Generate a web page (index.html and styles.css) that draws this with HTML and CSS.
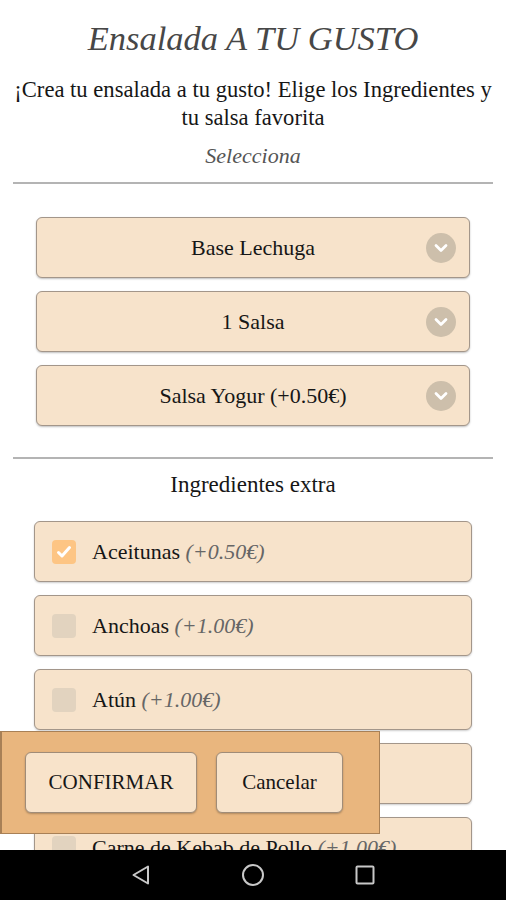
FILE: index.html
```html
<!DOCTYPE html>
<html lang="es">
<head>
<meta charset="utf-8">
<title>Ensalada A TU GUSTO</title>
<link rel="stylesheet" href="styles.css">
</head>
<body>
<div class="screen">
  <main class="content">
    <h1 class="title">Ensalada A TU GUSTO</h1>
    <p class="desc">¡Crea tu ensalada a tu gusto! Elige los Ingredientes y<br>tu salsa favorita</p>
    <p class="sub">Selecciona</p>
    <hr class="rule">
    <div class="selects">
      <div class="select"><span class="select-text">Base Lechuga</span><span class="chev"><svg width="14" height="10" viewBox="0 0 14 10"><path d="M2 2.5 L7 7.5 L12 2.5" fill="none" stroke="#fff" stroke-width="2.8" stroke-linecap="round" stroke-linejoin="round"/></svg></span></div>
      <div class="select"><span class="select-text">1 Salsa</span><span class="chev"><svg width="14" height="10" viewBox="0 0 14 10"><path d="M2 2.5 L7 7.5 L12 2.5" fill="none" stroke="#fff" stroke-width="2.8" stroke-linecap="round" stroke-linejoin="round"/></svg></span></div>
      <div class="select"><span class="select-text">Salsa Yogur (+0.50€)</span><span class="chev"><svg width="14" height="10" viewBox="0 0 14 10"><path d="M2 2.5 L7 7.5 L12 2.5" fill="none" stroke="#fff" stroke-width="2.8" stroke-linecap="round" stroke-linejoin="round"/></svg></span></div>
    </div>
    <hr class="rule rule2">
    <h2 class="section">Ingredientes extra</h2>
    <div class="items">
      <div class="item"><span class="box checked"><svg width="16" height="14" viewBox="0 0 16 14"><path d="M2.5 7.5 L6 11 L13.5 2.5" fill="none" stroke="#fff" stroke-width="3" stroke-linecap="round" stroke-linejoin="round"/></svg></span><span class="name">Aceitunas <em class="price">(+0.50€)</em></span></div>
      <div class="item"><span class="box"></span><span class="name">Anchoas <em class="price">(+1.00€)</em></span></div>
      <div class="item"><span class="box"></span><span class="name">Atún <em class="price">(+1.00€)</em></span></div>
      <div class="item"><span class="box"></span><span class="name">Bacon <em class="price">(+1.00€)</em></span></div>
      <div class="item"><span class="box"></span><span class="name">Carne de Kebab de Pollo <em class="price">(+1.00€)</em></span></div>
    </div>
  </main>
  <nav class="navbar">
    <svg width="24" height="24" viewBox="0 0 24 24"><path d="M19 3.5 L19 20.5 L4.5 12 Z" fill="none" stroke="#c8c8c8" stroke-width="2" stroke-linejoin="round"/></svg>
    <svg width="24" height="24" viewBox="0 0 24 24"><circle cx="12" cy="12" r="10" fill="none" stroke="#c8c8c8" stroke-width="2"/></svg>
    <svg width="24" height="24" viewBox="0 0 24 24"><rect x="3.5" y="3.5" width="17" height="17" rx="1" fill="none" stroke="#c8c8c8" stroke-width="2"/></svg>
  </nav>
  <div class="action-bar">
    <button class="btn btn-confirm">CONFIRMAR</button>
    <button class="btn btn-cancel">Cancelar</button>
  </div>
</div>
</body>
</html>
```
FILE: styles.css
```css
* { box-sizing: border-box; }
html, body { margin: 0; padding: 0; }
body {
  font-family: "Liberation Serif", "Times New Roman", serif;
  background: #fff;
  color: #161616;
}
.screen {
  position: relative;
  width: 506px;
  height: 900px;
  display: flex;
  flex-direction: column;
  overflow: hidden;
}
.content {
  flex: 1;
  min-height: 0;
  overflow: hidden;
  display: flex;
  flex-direction: column;
}
.content > * { flex-shrink: 0; }
.title {
  margin: 18px 0 0;
  font-size: 34.5px;
  line-height: 40px;
  font-style: italic;
  font-weight: normal;
  color: #474747;
  text-align: center;
}
.desc {
  margin: 18px 4px 0;
  font-size: 22.6px;
  line-height: 28px;
  text-align: center;
  color: #161616;
  white-space: nowrap;
}
.sub {
  margin: 10px 0 0;
  font-size: 22px;
  line-height: 28px;
  font-style: italic;
  text-align: center;
  color: #555;
}
.rule {
  margin: 12px 13px 0;
  border: 0;
  height: 2px;
  background: #b4b4b4;
}
.selects {
  margin: 33px 36px 0;
  display: flex;
  flex-direction: column;
  gap: 13px;
}
.select {
  height: 61px;
  background: #f7e3cb;
  border: 1px solid #a3968a;
  border-radius: 6px;
  box-shadow: 0 1px 2px rgba(0,0,0,0.25);
  display: flex;
  align-items: center;
  justify-content: center;
  position: relative;
}
.select-text {
  font-size: 22px;
  color: #161616;
}
.chev {
  position: absolute;
  right: 13px;
  top: 50%;
  margin-top: -15px;
  width: 30px;
  height: 30px;
  border-radius: 50%;
  background: #cdbfab;
  display: flex;
  align-items: center;
  justify-content: center;
}
.rule2 { margin-top: 31px; }
.section {
  margin: 12px 0 0;
  font-size: 23px;
  line-height: 28px;
  font-weight: normal;
  text-align: center;
  color: #161616;
}
.items {
  margin: 22px 34px 0;
  display: flex;
  flex-direction: column;
  gap: 13px;
}
.item {
  flex: none;
  height: 61px;
  background: #f7e3cb;
  border: 1px solid #a3968a;
  border-radius: 6px;
  box-shadow: 0 1px 2px rgba(0,0,0,0.2);
  display: flex;
  align-items: center;
  padding-left: 17px;
  gap: 16px;
}
.box {
  flex: none;
  width: 24px;
  height: 24px;
  border-radius: 4px;
  background: #e2d3bf;
  display: flex;
  align-items: center;
  justify-content: center;
}
.box.checked { background: #fdc584; }
.name {
  font-size: 22px;
  color: #161616;
  white-space: nowrap;
}
.price {
  color: #666;
  font-style: italic;
}
.navbar {
  flex: none;
  height: 50px;
  background: #000;
  display: flex;
  align-items: center;
  justify-content: center;
  gap: 88px;
}
.action-bar {
  position: absolute;
  left: 0;
  top: 731px;
  width: 380px;
  height: 103px;
  background: #e9b67e;
  border: 1px solid #a88056;
  border-left-width: 2px;
  display: flex;
  align-items: center;
  padding-left: 23px;
  gap: 19px;
}
.btn {
  height: 61px;
  background: #f8e3ca;
  border: 1px solid #a08c78;
  border-radius: 6px;
  box-shadow: 0 1px 2px rgba(0,0,0,0.25);
  font-family: "Liberation Serif", "Times New Roman", serif;
  font-size: 21px;
  color: #161616;
  padding: 0;
}
.btn-confirm { width: 172px; }
.btn-cancel { width: 127px; }
```
